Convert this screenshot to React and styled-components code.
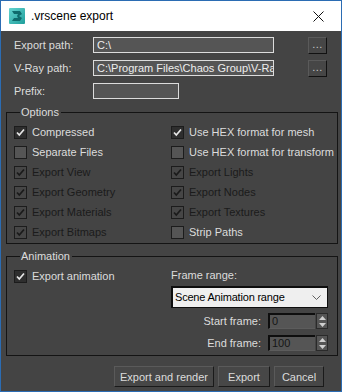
import styled, { createGlobalStyle, css } from "styled-components";

const GlobalStyle = createGlobalStyle`
  html, body {
    margin: 0;
    padding: 0;
    background: #444444;
  }
  * {
    box-sizing: border-box;
  }
`;

const Window = styled.div`
  width: 342px;
  height: 392px;
  border: 1px solid #2b6cb3;
  border-top: none;
  background: #444444;
  font-family: "Liberation Sans", Arial, sans-serif;
  font-size: 11px;
  color: #dcdcdc;
  display: flex;
  flex-direction: column;
`;

const TitleBar = styled.div`
  height: 31px;
  background: #ffffff;
  border-top: 1px solid #2b6cb3;
  display: flex;
  align-items: center;
  padding-left: 8px;
  color: #000;
  font-size: 12px;
`;

const TitleText = styled.span`
  margin-left: 6px;
  flex: 1;
  margin-top: -1px;
`;

const CloseBox = styled.div`
  width: 46px;
  height: 30px;
  display: flex;
  align-items: center;
  justify-content: center;
`;

const Body = styled.div`
  flex: 1;
  padding: 5px 3px 0 5px;
  display: flex;
  flex-direction: column;
`;

const PathRow = styled.div`
  height: 23px;
  display: grid;
  grid-template-columns: 87px 181px 34px 19px;
  align-items: start;
  padding-top: 1px;
`;

const Label = styled.span`
  line-height: 16px;
  padding-left: 8px;
  white-space: nowrap;
`;

const TextField = styled.div`
  height: 16px;
  border: 1px solid #dcdcdc;
  background: #555555;
  color: #eeeeee;
  line-height: 14px;
  padding-left: 3px;
  white-space: nowrap;
  overflow: hidden;
  text-overflow: clip;
  ${(p) =>
    p.$short &&
    css`
      width: 86px;
    `}
`;

const DotsButton = styled.div`
  grid-column: 4;
  height: 17px;
  background: #464646;
  border: 1px solid;
  border-color: #5a5a5a #111111 #111111 #5a5a5a;
  font-size: 11px;
  line-height: 12px;
  text-align: center;
  color: #c8c8c8;
  letter-spacing: 0.5px;
`;

const Group = styled.fieldset`
  margin: 0;
  padding: 0 6px 0 7px;
  border: 1px solid #141414;
  min-width: 0;
  ${(p) =>
    p.$gap &&
    css`
      margin-top: ${p.$gap}px;
    `}
`;

const Legend = styled.legend`
  margin-left: 6px;
  padding: 0 2px 0 1px;
  line-height: 16px;
  color: #dcdcdc;
`;

const OptionGrid = styled.div`
  display: grid;
  grid-template-columns: 157px 1fr;
  grid-auto-rows: 20px;
  padding: 2px 0 1px 0;
`;

const CheckRow = styled.div`
  display: flex;
  align-items: center;
  gap: 5px;
  white-space: nowrap;
`;

const CheckText = styled.span`
  color: ${(p) => (p.$dim ? "#1b1b1b" : "#dcdcdc")};
`;

const Box = styled.span`
  width: 13px;
  height: 13px;
  flex: none;
  border: 1px solid #1c1c1c;
  display: flex;
  align-items: center;
  justify-content: center;
  background: ${(p) =>
    p.$state === "on" ? "#2e2e2e" : p.$state === "dim" ? "#464646" : "#555555"};
`;

const AnimGrid = styled.div`
  display: grid;
  grid-template-columns: 157px 157px;
  padding: 2px 0 4px 0;
`;

const AnimLeft = styled.div`
  height: 20px;
  display: flex;
`;

const RangeColumn = styled.div`
  display: flex;
  flex-direction: column;
`;

const RangeLabel = styled.div`
  height: 20px;
  line-height: 18px;
`;

const Select = styled.div`
  height: 22px;
  background: #efefef;
  border: 1px solid #0e0e0e;
  box-shadow: inset 1px 1px 0 #0e0e0e;
  color: #000;
  display: flex;
  align-items: center;
  justify-content: space-between;
  padding: 0 6px 0 3px;
  letter-spacing: -0.2px;
`;

const SpinRow = styled.div`
  display: flex;
  justify-content: flex-end;
  align-items: center;
  height: 16px;
  margin-top: ${(p) => p.$top}px;
`;

const SpinLabel = styled.span`
  margin-right: 7px;
`;

const SpinField = styled.div`
  width: 47px;
  height: 16px;
  background: #555555;
  border-top: 2px solid #0e0e0e;
  border-left: 2px solid #0e0e0e;
  border-bottom: 1px solid #5c5c5c;
  color: #161616;
  line-height: 13px;
  padding-left: 2px;
`;

const SpinArrows = styled.div`
  width: 12px;
  height: 16px;
  margin-left: 1px;
  background: #555555;
  border: 1px solid #2a2a2a;
  display: flex;
  flex-direction: column;
  align-items: center;
  justify-content: space-around;
`;

const Footer = styled.div`
  display: flex;
  justify-content: flex-end;
  gap: 4px;
  margin-top: 10px;
  padding-right: 14px;
`;

const Button = styled.div`
  height: 21px;
  width: ${(p) => p.$w}px;
  background: #474747;
  border: 1px solid;
  border-color: #5a5a5a #1a1a1a #1a1a1a #5a5a5a;
  display: flex;
  align-items: center;
  justify-content: center;
  color: #dcdcdc;
  white-space: nowrap;
`;

function MaxIcon() {
  return (
    <svg width="16" height="16" viewBox="0 0 16 16">
      <defs>
        <linearGradient id="mx" x1="0" y1="0" x2="1" y2="1">
          <stop offset="0" stopColor="#63d4d0" />
          <stop offset="1" stopColor="#1f9e9b" />
        </linearGradient>
      </defs>
      <rect x="0" y="0" width="16" height="16" rx="1" fill="url(#mx)" />
      <polygon points="3,3 11,3 13,6 10,8 13,10 11,13 3,13 5,10 9,10 8,8 9,6 5,6" fill="#0f6b6d" />
    </svg>
  );
}

function Check({ dim }) {
  return (
    <svg width="9" height="9" viewBox="0 0 9 9">
      <polyline
        points="1,4.5 3.3,7 8,1.5"
        fill="none"
        stroke={dim ? "#1a1a1a" : "#e6e6e6"}
        strokeWidth="1.7"
      />
    </svg>
  );
}

function Option({ label, checked, dim }) {
  const state = dim ? "dim" : checked ? "on" : "off";
  return (
    <CheckRow>
      <Box $state={state}>{checked && <Check dim={dim} />}</Box>
      <CheckText $dim={dim}>{label}</CheckText>
    </CheckRow>
  );
}

const options = [
  ["Compressed", true, false],
  ["Use HEX format for mesh", true, false],
  ["Separate Files", false, false],
  ["Use HEX format for transform", false, false],
  ["Export View", true, true],
  ["Export Lights", true, true],
  ["Export Geometry", true, true],
  ["Export Nodes", true, true],
  ["Export Materials", true, true],
  ["Export Textures", true, true],
  ["Export Bitmaps", true, true],
  ["Strip Paths", false, false],
];

function Spinner({ label, value, top }) {
  return (
    <SpinRow $top={top}>
      <SpinLabel>{label}</SpinLabel>
      <SpinField>{value}</SpinField>
      <SpinArrows>
        <svg width="7" height="4" viewBox="0 0 7 4">
          <polygon points="0,4 3.5,0 7,4" fill="#d0d0d0" />
        </svg>
        <svg width="7" height="4" viewBox="0 0 7 4">
          <polygon points="0,0 3.5,4 7,0" fill="#d0d0d0" />
        </svg>
      </SpinArrows>
    </SpinRow>
  );
}

export default function App() {
  return (
    <>
      <GlobalStyle />
      <Window>
        <TitleBar>
          <MaxIcon />
          <TitleText>.vrscene export</TitleText>
          <CloseBox>
            <svg width="11" height="11" viewBox="0 0 11 11">
              <path d="M0.5 0.5 L10.5 10.5 M10.5 0.5 L0.5 10.5" stroke="#111" strokeWidth="1" />
            </svg>
          </CloseBox>
        </TitleBar>
        <Body>
          <PathRow>
            <Label>Export path:</Label>
            <TextField>C:\</TextField>
            <span />
            <DotsButton>...</DotsButton>
          </PathRow>
          <PathRow>
            <Label>V-Ray path:</Label>
            <TextField>C:\Program Files\Chaos Group\V-Ra</TextField>
            <span />
            <DotsButton>...</DotsButton>
          </PathRow>
          <PathRow>
            <Label>Prefix:</Label>
            <TextField $short />
          </PathRow>

          <Group $gap={-1}>
            <Legend>Options</Legend>
            <OptionGrid>
              {options.map(([label, checked, dim]) => (
                <Option key={label} label={label} checked={checked} dim={dim} />
              ))}
            </OptionGrid>
          </Group>

          <Group $gap={4}>
            <Legend>Animation</Legend>
            <AnimGrid>
              <AnimLeft>
                <Option label="Export animation" checked />
              </AnimLeft>
              <RangeColumn>
                <RangeLabel>Frame range:</RangeLabel>
                <Select>
                  <span>Scene Animation range</span>
                  <svg width="9" height="5" viewBox="0 0 9 5">
                    <polyline points="0.5,0.5 4.5,4.5 8.5,0.5" fill="none" stroke="#606060" strokeWidth="1" />
                  </svg>
                </Select>
                <Spinner label="Start frame:" value="0" top={5} />
                <Spinner label="End frame:" value="100" top={6} />
              </RangeColumn>
            </AnimGrid>
          </Group>

          <Footer>
            <Button $w={100}>Export and render</Button>
            <Button $w={52}>Export</Button>
            <Button $w={50}>Cancel</Button>
          </Footer>
        </Body>
      </Window>
    </>
  );
}
